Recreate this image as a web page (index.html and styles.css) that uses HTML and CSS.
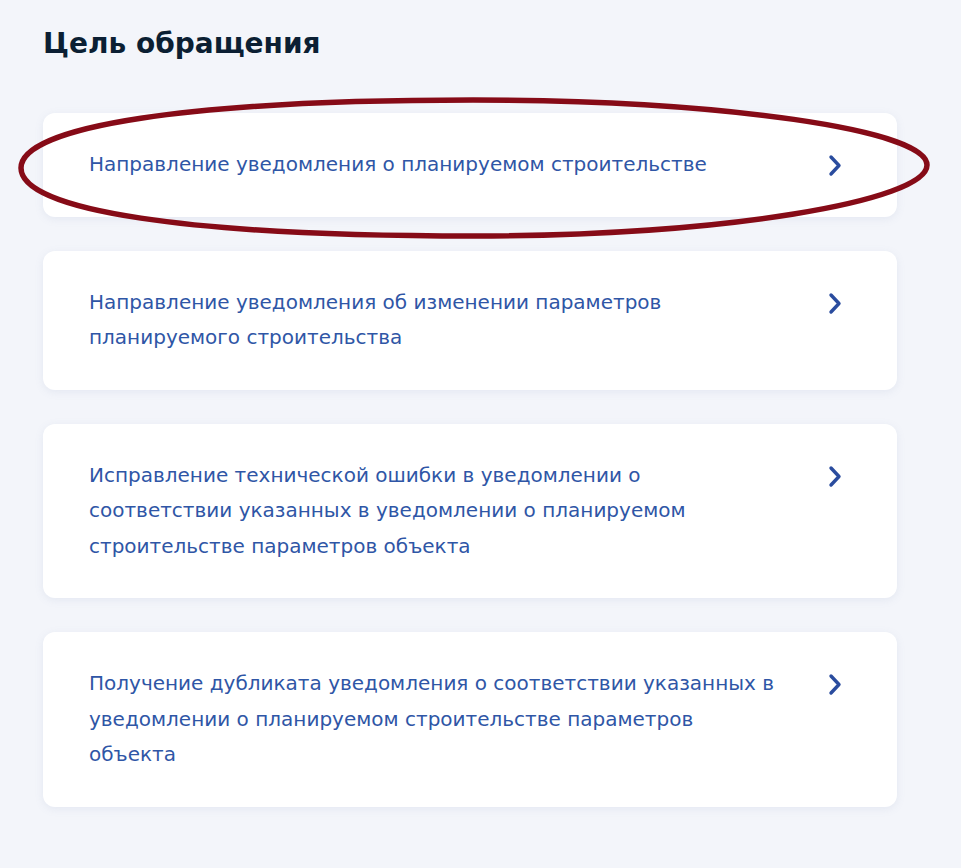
FILE: index.html
```html
<!DOCTYPE html>
<html lang="ru">
<head>
    <meta charset="UTF-8">
    <title>Цель обращения</title>
    <link rel="stylesheet" href="styles.css">
</head>
<body>
    <div class="page">
        <h1>Цель обращения</h1>

        <div class="list">
            <a class="option" href="#">
                <span class="option-text">Направление уведомления о планируемом строительстве</span>
                <svg class="chevron" viewBox="0 0 14 23"><path d="M3 3 L11 11.5 L3 20"/></svg>
            </a>
            <a class="option" href="#">
                <span class="option-text">Направление уведомления об изменении параметров планируемого строительства</span>
                <svg class="chevron" viewBox="0 0 14 23"><path d="M3 3 L11 11.5 L3 20"/></svg>
            </a>
            <a class="option" href="#">
                <span class="option-text">Исправление технической ошибки в уведомлении о соответствии указанных в уведомлении о планируемом строительстве параметров объекта</span>
                <svg class="chevron" viewBox="0 0 14 23"><path d="M3 3 L11 11.5 L3 20"/></svg>
            </a>
            <a class="option" href="#">
                <span class="option-text">Получение дубликата уведомления о соответствии указанных в уведомлении о планируемом строительстве параметров объекта</span>
                <svg class="chevron" viewBox="0 0 14 23"><path d="M3 3 L11 11.5 L3 20"/></svg>
            </a>
        </div>

        <!-- hand-drawn marker round the first option -->
        <svg class="mark" width="961" height="868" viewBox="0 0 961 868">
            <path d="M21 168 C21 126 190 100 473 100 C723 100 927 130 927 165 C927 201 723 236 473 236 C190 236 21 211 21 168 Z"/>
        </svg>
    </div>
</body>
</html>
```

FILE: styles.css
```css
body {
    margin: 0;
    background-color: #f3f5fa;
    font-family: Lato, "Noto Sans", sans-serif;
}
.page {
    position: relative;
    padding: 26px 64px 40px 43px;
    min-height: 800px;
}
h1 {
    margin: 0 0 51px;
    font-family: "DejaVu Sans", sans-serif;
    font-size: 28px;
    font-weight: 700;
    line-height: 36px;
    color: #0b1f33;
}
.list {
    display: flex;
    flex-direction: column;
    gap: 34px;
}
.option {
    display: flex;
    align-items: flex-start;
    gap: 49px;
    padding: 34px 55px 34px 46px;
    background: #fff;
    border-radius: 12px;
    box-shadow: 0 2px 8px rgba(120, 140, 180, 0.12);
    text-decoration: none;
}
.option-text {
    flex: 1;
    font-family: "DejaVu Sans", sans-serif;
    font-size: 20px;
    line-height: 35.5px;
    color: #2f56a6;
}
.chevron {
    flex: none;
    width: 14px;
    height: 23px;
    margin-top: 7px;
}
.chevron path {
    fill: none;
    stroke: #2a4c9e;
    stroke-width: 3.4;
    stroke-linecap: round;
    stroke-linejoin: round;
}
.mark {
    position: absolute;
    left: 0;
    top: 0;
    pointer-events: none;
}
.mark path {
    fill: none;
    stroke: #860b17;
    stroke-width: 5.5;
}
```
